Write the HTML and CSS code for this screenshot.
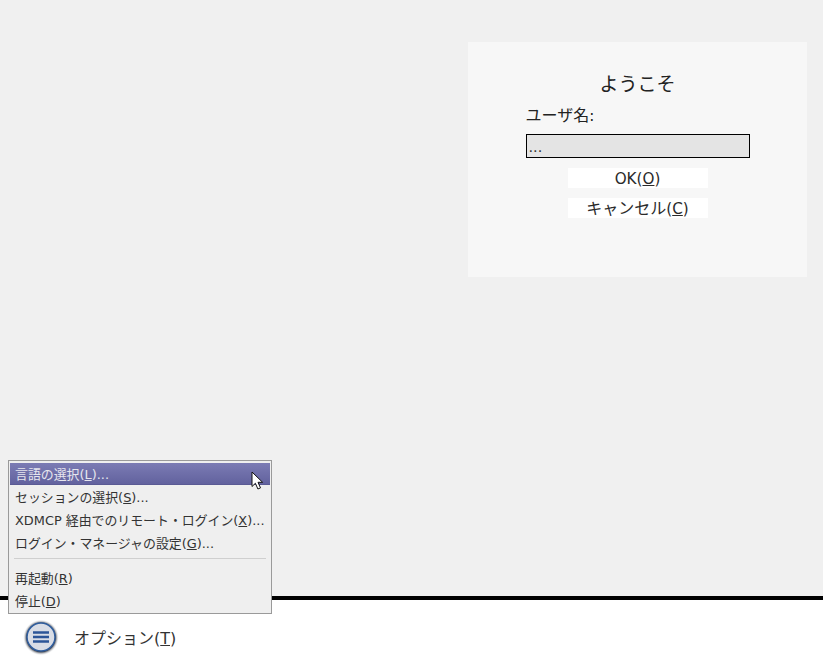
FILE: index.html
```html
<!DOCTYPE html>
<html lang="ja">
<head>
<meta charset="utf-8">
<title>ログイン</title>
<link rel="stylesheet" href="styles.css">
</head>
<body>
<main class="stage">
  <section class="greeter">
    <h1 class="welcome">ようこそ</h1>
    <div class="field">
      <label class="prompt">ユーザ名<span class="lat">:</span></label>
      <div class="entry">...</div>
    </div>
    <div class="btn"><span class="lat">OK(<u>O</u>)</span></div>
    <div class="btn">キャンセル<span class="lat">(<u>C</u>)</span></div>
  </section>
</main>
<footer class="panel">
  <span class="opt-icon">
    <svg width="36" height="36" viewBox="0 0 36 36">
      <defs>
        <radialGradient id="halo"><stop offset="0.8" stop-color="#3e4450"/><stop offset="1" stop-color="#ffffff" stop-opacity="0"/></radialGradient>
      </defs>
      <circle cx="18" cy="18.5" r="18" fill="url(#halo)"/>
      <circle cx="18" cy="18" r="14" fill="#d9dde6" stroke="#2f5d9e" stroke-width="1.5"/>
      <path d="M10 13.5h16M10 18h16M10 22.5h16" stroke="#2c5598" stroke-width="2.4" fill="none"/>
    </svg>
  </span>
  <span class="opt-label">オプション(<u>T</u>)</span>
</footer>
<nav class="menu">
  <div class="item active">言語の選択(<u>L</u>)...</div>
  <div class="item">セッションの選択(<u>S</u>)...</div>
  <div class="item">XDMCP 経由でのリモート・ログイン(<u>X</u>)...</div>
  <div class="item">ログイン・マネージャの設定(<u>G</u>)...</div>
  <div class="sep"></div>
  <div class="item">再起動(<u>R</u>)</div>
  <div class="item">停止(<u>D</u>)</div>
</nav>
<svg class="cursor" width="13" height="20" viewBox="0 0 13 20">
  <path d="M1 1v14.5l3.4-3.2 2.5 5.7 2.6-1.1-2.5-5.6h4.6z" fill="#fff" stroke="#111" stroke-width="1"/>
</svg>
</body>
</html>
```
FILE: styles.css
```css
* { box-sizing: border-box; }
html, body { margin: 0; height: 100%; }
body {
  width: 823px;
  height: 670px;
  overflow: hidden;
  display: flex;
  flex-direction: column;
  background: #fff;
  color: #222;
  font-family: "DejaVu Sans", "Noto Sans CJK JP", sans-serif;
}
.stage {
  height: 596px;
  background: #f0f0f0;
  display: flex;
  justify-content: flex-end;
  align-items: flex-start;
  padding: 42px 16px 0 0;
}
.greeter {
  width: 339px;
  height: 235px;
  background: #f7f7f7;
  display: flex;
  flex-direction: column;
  align-items: center;
  padding-top: 29px;
}
.welcome {
  margin: 0;
  font-size: 19px;
  font-weight: 400;
  line-height: 26px;
}
.field { width: 224px; margin-top: 8px; }
.prompt {
  display: block;
  font-size: 16px;
  line-height: 22px;
}
.lat { font-size: 15.2px; }
.entry {
  margin-top: 7px;
  height: 24px;
  border: 1px solid #000;
  background: #e4e4e4;
  padding-left: 2px;
  font-size: 14.5px;
  line-height: 25px;
  color: #333;
}
.btn {
  width: 140px;
  height: 20px;
  margin-top: 10px;
  background: #fff;
  text-align: center;
  font-size: 16px;
  line-height: 22px;
  color: #2a2a2a;
}
.panel {
  flex: 1;
  border-top: 4px solid #000;
  background: #fff;
  display: flex;
  align-items: center;
  gap: 15px;
  padding: 4px 0 0 23px;
}
.opt-icon { display: flex; width: 36px; height: 36px; }
.opt-label { font-size: 16px; color: #333; }
.menu {
  position: absolute;
  left: 8px;
  top: 460px;
  width: 264px;
  height: 154px;
  background: #efefef;
  border: 1px solid #9a9a9a;
  padding: 2px 1px 1px;
  font-size: 12.9px;
  color: #333;
}
.item {
  height: 23px;
  line-height: 23px;
  padding-left: 5px;
  white-space: nowrap;
}
.item.active {
  height: 22px;
  line-height: 23px;
  margin-bottom: 1px;
  background: linear-gradient(#7b7bb4, #62629e);
  color: #e6e6ee;
  border-bottom: 1px solid #5a5a94;
}
.sep {
  height: 1px;
  margin: 3px 4px 8px;
  background: #cfcfcf;
}
.cursor {
  position: absolute;
  left: 251px;
  top: 471px;
}
```
